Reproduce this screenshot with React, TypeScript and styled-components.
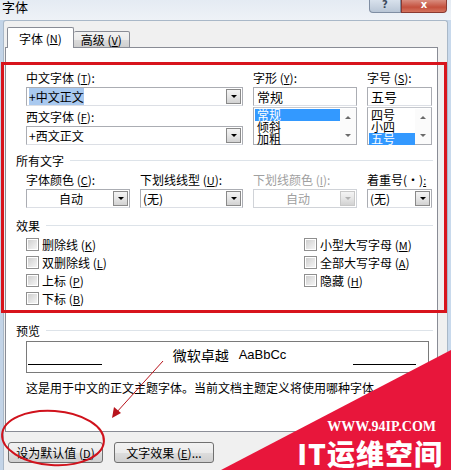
import styled, { createGlobalStyle } from 'styled-components'

const GlobalStyle = createGlobalStyle`
  html, body {
    margin: 0;
    padding: 0;
    background: #fff;
  }
  body {
    font-family: "Noto Sans CJK SC", "Liberation Sans", sans-serif;
    font-size: 12px;
    color: #000;
  }
`

const Window = styled.div`
  position: relative;
  width: 451px;
  height: 470px;
  overflow: hidden;
  display: flex;
  flex-direction: column;
  background: linear-gradient(90deg, #c3d4e7 0%, #d6e2f0 60%, #c8d9ec 100%);
`

const TitleBar = styled.div`
  height: 20px;
  display: flex;
  align-items: flex-start;
  justify-content: space-between;
  background: linear-gradient(180deg, #e4ebf3 0%, #eef2f7 100%);
`

const Title = styled.div`
  margin: 0 0 0 2px;
  font-size: 13px;
  line-height: 13px;
`

const Captions = styled.div`
  display: flex;
  margin-right: 4px;
`

const CaptionButton = styled.div<{ $close?: boolean }>`
  width: ${p => (p.$close ? 44 : 30)}px;
  height: 12px;
  border: 1px solid ${p => (p.$close ? '#8a3a32' : '#7f8ea3')};
  border-top: none;
  border-radius: ${p => (p.$close ? '0 0 4px 0' : '0 0 0 4px')};
  background: ${p =>
    p.$close
      ? 'linear-gradient(180deg, #d98d7f 0%, #c4503d 60%, #d4745f 100%)'
      : 'linear-gradient(180deg, #d8e1ec 0%, #b9c6d6 100%)'};
  color: ${p => (p.$close ? '#fff' : '#3c4a5c')};
  font: bold 10px/10px "DejaVu Sans", sans-serif;
  display: flex;
  justify-content: center;
  overflow: hidden;
`

const Client = styled.div`
  flex: 1;
  margin: 0 3px;
  background: #f0f0f0;
  border: 1px solid #a9b8c8;
  border-bottom: none;
  border-radius: 3px 3px 0 0;
  display: flex;
  flex-direction: column;
`

const TabStrip = styled.div`
  display: flex;
  align-items: flex-end;
  margin: 6px 0 0 3px;
  height: 21px;
  position: relative;
  z-index: 1;
`

const Tab = styled.div<{ $active?: boolean }>`
  height: ${p => (p.$active ? 21 : 17)}px;
  box-sizing: border-box;
  padding: 0 ${p => (p.$active ? 11 : 7)}px;
  border: 1px solid #898c95;
  border-bottom: ${p => (p.$active ? 'none' : '1px solid #898c95')};
  border-left: ${p => (p.$active ? '1px solid #898c95' : 'none')};
  border-radius: 2px 2px 0 0;
  background: ${p =>
    p.$active ? '#fff' : 'linear-gradient(180deg, #f2f2f2 0%, #ebebeb 50%, #dcdcdc 51%, #cfcfcf 100%)'};
  display: flex;
  align-items: center;
  font-size: 12px;
  white-space: nowrap;
`

const Panel = styled.div`
  margin: -1px 9px 0 1px;
  height: 385px;
  box-sizing: border-box;
  background: #fff;
  border: 1px solid #898c95;
  padding: 23px 4px 0 10px;
  display: flex;
  flex-direction: column;
`

const Group = styled.div`
  padding-left: 10px;
`

const FontGrid = styled.div`
  display: grid;
  grid-template-columns: 217px 104px 65px;
  column-gap: 10px;
  align-items: start;
`

const Column = styled.div`
  display: flex;
  flex-direction: column;
`

const Label = styled.div<{ $disabled?: boolean; $gap?: number }>`
  height: 16px;
  line-height: 14px;
  margin-top: ${p => p.$gap ?? 0}px;
  white-space: nowrap;
  color: ${p => (p.$disabled ? '#a0a0a0' : '#000')};
`

const Key = styled.span`
  text-decoration: underline;
  font-size: 11px;
`

const Combo = styled.div<{ $disabled?: boolean; $center?: boolean }>`
  height: 19px;
  box-sizing: border-box;
  border: 1px solid ${p => (p.$disabled ? '#d0d3d8' : '#abadb3')};
  border-bottom-color: ${p => (p.$disabled ? '#d0d3d8' : '#dcdfe5')};
  background: #fff;
  display: flex;
  align-items: center;
  padding-left: 2px;
  color: ${p => (p.$disabled ? '#a0a0a0' : '#000')};
  span.value {
    flex: 1;
    text-align: ${p => (p.$center ? 'center' : 'left')};
    line-height: 14px;
  }
`

const Selected = styled.span`
  background: #a9c9ef;
  line-height: 14px;
`

const DropButton = styled.div<{ $disabled?: boolean }>`
  width: 15px;
  height: 15px;
  margin-right: 1px;
  box-sizing: border-box;
  border: 1px solid ${p => (p.$disabled ? '#c8c8c8' : '#8a8a8a')};
  background: linear-gradient(180deg, #f4f4f4 0%, #e6e6e6 50%, #d2d2d2 100%);
  display: flex;
  align-items: center;
  justify-content: center;
  &:after {
    content: '';
    border-left: 3px solid transparent;
    border-right: 3px solid transparent;
    border-top: 3px solid ${p => (p.$disabled ? '#b0b0b0' : '#000')};
  }
`

const TextBox = styled.div`
  height: 19px;
  box-sizing: border-box;
  border: 1px solid #abadb3;
  border-bottom-color: #dcdfe5;
  padding-left: 3px;
  line-height: 17px;
  font-size: 13px;
`

const ListBox = styled.div`
  margin-top: 1px;
  height: 38px;
  box-sizing: border-box;
  border: 1px solid #abadb3;
  border-top-color: #c5c8ce;
  display: flex;
  padding: 1px 0 0 1px;
`

const Items = styled.div`
  flex: 1;
  display: flex;
  flex-direction: column;
`

const Item = styled.div<{ $selected?: boolean }>`
  height: 12px;
  line-height: 12px;
  font-size: 12px;
  padding-left: 2px;
  background: ${p => (p.$selected ? '#3399ff' : 'transparent')};
  color: ${p => (p.$selected ? '#fff' : '#000')};
`

const ScrollBar = styled.div`
  width: 16px;
  display: flex;
  flex-direction: column;
  align-items: center;
  justify-content: space-around;
  background: #fbfbfb;
`

const Arrow = styled.div<{ $up?: boolean }>`
  border-left: 3px solid transparent;
  border-right: 3px solid transparent;
  ${p => (p.$up ? 'border-bottom' : 'border-top')}: 3px solid #6a6a6a;
`

const SectionHeader = styled.div<{ $gap: number }>`
  display: flex;
  align-items: center;
  gap: 6px;
  height: 15px;
  margin-top: ${p => p.$gap}px;
  white-space: nowrap;
  &:after {
    content: '';
    flex: 1;
    height: 1px;
    background: #dde3e9;
  }
`

const StyleRow = styled.div`
  display: grid;
  grid-template-columns: 104px 103px 104px 65px;
  column-gap: 10px;
  margin-top: 5px;
`

const Effects = styled.div`
  display: grid;
  grid-template-columns: 278px 1fr;
  margin-top: 2px;
`

const CheckColumn = styled.div`
  display: flex;
  flex-direction: column;
`

const CheckRow = styled.div`
  height: 18px;
  display: flex;
  align-items: center;
  gap: 3px;
  white-space: nowrap;
`

const Box = styled.div`
  width: 13px;
  height: 13px;
  box-sizing: border-box;
  border: 1px solid #8f8f8f;
  padding: 1px;
  &:after {
    content: '';
    display: block;
    width: 100%;
    height: 100%;
    background: linear-gradient(135deg, #cfcfcf 0%, #e6e6e6 60%, #f4f4f4 100%);
  }
`

const Preview = styled.div`
  margin: 3px 4px 0 10px;
  height: 32px;
  box-sizing: border-box;
  border: 1px solid #7a7a7a;
  display: flex;
  align-items: center;
  padding: 0 12px 0 1px;
`

const Rule = styled.div<{ $width: number }>`
  width: ${p => p.$width}px;
  height: 1px;
  background: #000;
  align-self: flex-end;
  margin-bottom: 7px;
`

const Sample = styled.div`
  flex: 1;
  display: flex;
  align-items: center;
  justify-content: center;
  gap: 10px;
  padding-bottom: 5px;
  padding-left: 4px;
  font-size: 14px;
  span.latin {
    font-family: "Liberation Sans", sans-serif;
    font-size: 13px;
  }
`

const Note = styled.div`
  margin: 7px 0 0 10px;
  line-height: 16px;
  white-space: nowrap;
`

const ButtonRow = styled.div`
  display: flex;
  gap: 11px;
  margin: 10px 0 0 4px;
`

const Button = styled.div<{ $width: number }>`
  width: ${p => p.$width}px;
  height: 21px;
  box-sizing: border-box;
  border: 1px solid #707070;
  border-radius: 3px;
  background: linear-gradient(180deg, #f2f2f2 0%, #ebebeb 50%, #dddddd 51%, #cfcfcf 100%);
  display: flex;
  align-items: center;
  justify-content: center;
  white-space: nowrap;
`

const Annotations = styled.svg`
  position: absolute;
  left: 0;
  top: 0;
  pointer-events: none;
`

const Watermark = styled.div`
  position: absolute;
  right: 0;
  bottom: 0;
  width: 230px;
  height: 120px;
  display: flex;
  flex-direction: column;
  align-items: flex-end;
  justify-content: flex-end;
  color: #fff;
  font-weight: bold;
  &:before {
    content: '';
    position: absolute;
    inset: 0;
    background: #e8163b;
    clip-path: polygon(100% 0, 100% 100%, 0 100%);
  }
  & > * {
    position: relative;
  }
`

const Site = styled.div`
  font-family: "Liberation Serif", serif;
  font-size: 14px;
  line-height: 14px;
  margin-right: 15px;
`

const Brand = styled.div`
  font-family: "Noto Sans CJK SC", "Liberation Sans", sans-serif;
  font-size: 28px;
  line-height: 30px;
  font-weight: 900;
  letter-spacing: 1px;
  margin: 4px 8px 2px 0;
`

function DropCombo({ value, disabled, center }: { value: React.ReactNode; disabled?: boolean; center?: boolean }) {
  return (
    <Combo $disabled={disabled} $center={center}>
      <span className='value'>{value}</span>
      <DropButton $disabled={disabled} />
    </Combo>
  )
}

function List({ items, selected }: { items: string[]; selected: number }) {
  return (
    <ListBox>
      <Items>
        {items.map((t, i) => (
          <Item key={t} $selected={i === selected}>{t}</Item>
        ))}
      </Items>
      <ScrollBar>
        <Arrow $up />
        <Arrow />
      </ScrollBar>
    </ListBox>
  )
}

function Check({ label, k }: { label: string; k: string }) {
  return (
    <CheckRow>
      <Box />
      <span>
        {label} (<Key>{k}</Key>)
      </span>
    </CheckRow>
  )
}

export default function App() {
  return (
    <>
      <GlobalStyle />
      <Window>
        <TitleBar>
          <Title>字体</Title>
          <Captions>
            <CaptionButton>?</CaptionButton>
            <CaptionButton $close>x</CaptionButton>
          </Captions>
        </TitleBar>
        <Client>
          <TabStrip>
            <Tab $active>字体 (<Key>N</Key>)</Tab>
            <Tab>高级 (<Key>V</Key>)</Tab>
          </TabStrip>
          <Panel>
            <Group>
              <FontGrid>
                <Column>
                  <Label>中文字体 (<Key>T</Key>):</Label>
                  <Combo>
                    <span className='value'><Selected>+中文正文</Selected></span>
                    <DropButton />
                  </Combo>
                  <Label $gap={4}>西文字体 (<Key>F</Key>):</Label>
                  <DropCombo value='+西文正文' />
                </Column>
                <Column>
                  <Label>字形 (<Key>Y</Key>):</Label>
                  <TextBox>常规</TextBox>
                  <List items={['常规', '倾斜', '加粗']} selected={0} />
                </Column>
                <Column>
                  <Label>字号 (<Key>S</Key>):</Label>
                  <TextBox>五号</TextBox>
                  <List items={['四号', '小四', '五号']} selected={2} />
                </Column>
              </FontGrid>
            </Group>

            <SectionHeader $gap={8}>所有文字</SectionHeader>
            <Group>
              <StyleRow>
                <Column>
                  <Label>字体颜色 (<Key>C</Key>):</Label>
                  <DropCombo value='自动' center />
                </Column>
                <Column>
                  <Label>下划线线型 (<Key>U</Key>):</Label>
                  <DropCombo value='(无)' />
                </Column>
                <Column>
                  <Label $disabled>下划线颜色 (<Key>I</Key>):</Label>
                  <DropCombo value='自动' center disabled />
                </Column>
                <Column>
                  <Label>着重号(·)<Key>:</Key></Label>
                  <DropCombo value='(无)' />
                </Column>
              </StyleRow>
            </Group>

            <SectionHeader $gap={10}>效果</SectionHeader>
            <Group>
              <Effects>
                <CheckColumn>
                  <Check label='删除线' k='K' />
                  <Check label='双删除线' k='L' />
                  <Check label='上标' k='P' />
                  <Check label='下标' k='B' />
                </CheckColumn>
                <CheckColumn>
                  <Check label='小型大写字母' k='M' />
                  <Check label='全部大写字母' k='A' />
                  <Check label='隐藏' k='H' />
                </CheckColumn>
              </Effects>
            </Group>

            <SectionHeader $gap={16}>预览</SectionHeader>
            <Preview>
              <Rule $width={74} />
              <Sample>
                <span>微软卓越</span>
                <span className='latin'>AaBbCc</span>
              </Sample>
              <Rule $width={63} />
            </Preview>
            <Note>这是用于中文的正文主题字体。当前文档主题定义将使用哪种字体。</Note>
          </Panel>
          <ButtonRow>
            <Button $width={95}>设为默认值 (<Key>D</Key>)</Button>
            <Button $width={100}>文字效果 (<Key>E</Key>)...</Button>
          </ButtonRow>
        </Client>

        <Annotations width={451} height={470} viewBox='0 0 451 470'>
          <rect x={2.5} y={63.5} width={443} height={248} fill='none' stroke='#d8141c' strokeWidth={3} />
          <ellipse cx={53} cy={438} rx={51} ry={27} fill='none' stroke='#d0121c' strokeWidth={2} transform='rotate(4 53 438)' />
          <line x1={163} y1={361} x2={116} y2={413} stroke='#b8141c' strokeWidth={1} />
          <polygon points='112,418 114,407 121,413' fill='#b8141c' />
        </Annotations>

        <Watermark>
          <Site>WWW.94IP.COM</Site>
          <Brand>IT运维空间</Brand>
        </Watermark>
      </Window>
    </>
  )
}
